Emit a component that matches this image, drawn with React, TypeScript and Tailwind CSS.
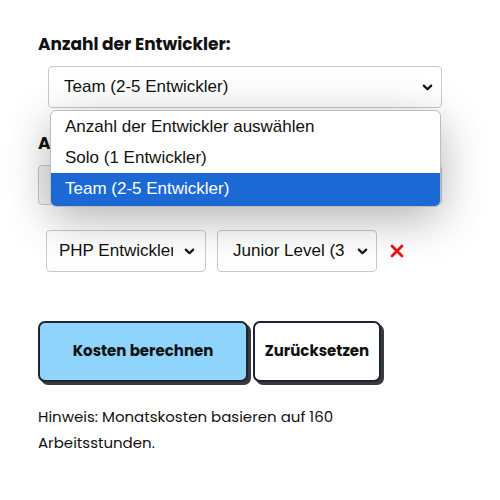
const Chevron = () => (
  <svg width="11" height="7" viewBox="0 0 11 7" className="shrink-0">
    <path d="M1.8 1.6 L5.5 5.2 L9.2 1.6" fill="none" stroke="#111" strokeWidth="2.2" strokeLinecap="round" strokeLinejoin="round" />
  </svg>
);

const FakeSelect = ({ value, className, textWidth }: { value: string; className: string; textWidth?: string }) => (
  <div
    className={`flex items-center justify-between rounded-[4px] border border-[#c9c9c9] bg-white text-[17px] text-[#111] ${className}`}
    style={{ fontFamily: '"Liberation Sans", Arial, sans-serif' }}
  >
    <span className={`overflow-hidden whitespace-nowrap ${textWidth ?? ''}`}>{value}</span>
    <Chevron />
  </div>
);

const options = [
  { label: 'Anzahl der Entwickler auswählen', active: false },
  { label: 'Solo (1 Entwickler)', active: false },
  { label: 'Team (2-5 Entwickler)', active: true },
];

export default function App() {
  return (
    <div className="w-[500px] h-[500px] bg-white pl-[38px] pt-[32px]" style={{ fontFamily: 'Poppins, Inter, "Noto Sans", sans-serif' }}>
      <p className="text-[17px] font-bold text-[#111] leading-[24px]">Anzahl der Entwickler:</p>

      <div className="relative mt-[10px] ml-[10px] w-[394px]">
        <FakeSelect value="Team (2-5 Entwickler)" className="h-[42px] pl-[15px] pr-[8px]" />
        <div
          className="absolute left-[2px] top-[44px] z-10 w-[391px] overflow-hidden rounded-[6px] border border-[#bdbdbd] bg-white shadow-[0_12px_45px_rgba(0,0,0,0.3)]"
          style={{ fontFamily: '"Liberation Sans", Arial, sans-serif' }}
        >
          {options.map(({ label, active }, index) => (
            <div
              key={index}
              className={`pl-[14px] text-[17px] ${active ? 'bg-[#1c68d4] text-white h-[33px] leading-[31px]' : 'text-[#111] h-[31px] leading-[31px]'}`}
            >
              {label}
            </div>
          ))}
        </div>
      </div>

      <p className="mt-[23px] text-[17px] font-bold text-[#111] leading-[24px]">Anforderungen:</p>
      <div className="mt-[10px] h-[40px] w-[404px] rounded-[4px] border border-[#c9c9c9] bg-[#f3f3f3]"></div>

      <div className="mt-[25px] ml-[8px] flex items-center gap-[11px]">
        <FakeSelect value="PHP Entwickler" textWidth="w-[114px]" className="h-[42px] w-[160px] pl-[12px] pr-[10px]" />
        <FakeSelect value="Junior Level (3 Jahre)" textWidth="w-[112px]" className="h-[42px] w-[160px] pl-[15px] pr-[8px]" />
        <svg width="14" height="14" viewBox="0 0 14 14" className="ml-[2px]">
          <path d="M2 2 L12 12 M12 2 L2 12" stroke="#f01010" strokeWidth="2.8" strokeLinecap="round" />
        </svg>
      </div>

      <div className="mt-[49px] flex gap-[5px]">
        <button className="h-[61px] w-[210px] rounded-[7px] border-2 border-[#1d2433] bg-[#8fd4fd] text-[15px] font-bold text-[#111] shadow-[3px_3px_0_#3a3a3a]">
          Kosten berechnen
        </button>
        <button className="h-[61px] w-[128px] rounded-[7px] border-2 border-[#1d2433] bg-white text-[15px] font-bold text-[#111] shadow-[3px_3px_0_#3a3a3a]">
          Zurücksetzen
        </button>
      </div>

      <p className="mt-[22px] w-[330px] text-[15px] leading-[26px] text-[#111]">
        Hinweis: Monatskosten basieren auf 160 Arbeitsstunden.
      </p>
    </div>
  );
}
